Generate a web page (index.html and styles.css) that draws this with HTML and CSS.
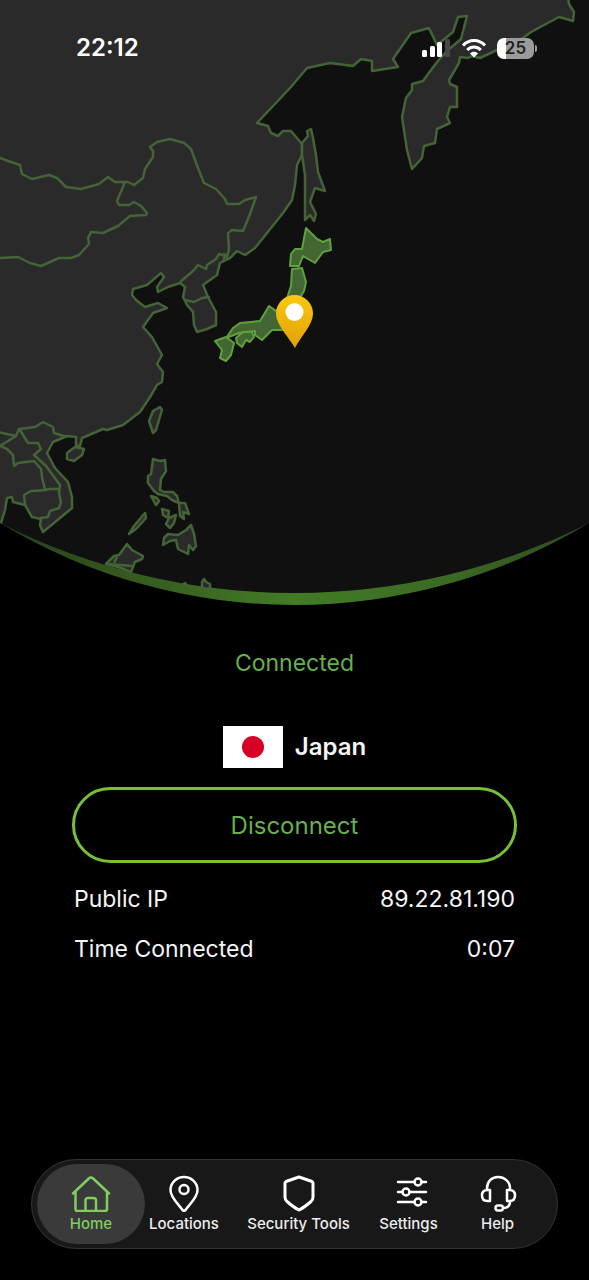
FILE: index.html
```html
<!DOCTYPE html>
<html lang="en">
<head>
    <meta charset="UTF-8">
    <meta name="viewport" content="width=device-width, initial-scale=1.0">
    <title>VPN - Connected</title>
    <link rel="stylesheet" href="styles.css">
</head>
<body>

    <header class="status-bar">
        <span class="clock">22:12</span>
        <div class="status-icons">
            <svg class="signal" viewBox="0 0 30 18" role="img" aria-label="Signal">
                <rect x="1" y="11" width="5" height="7" rx="1.5"/>
                <rect x="9" y="7" width="5" height="11" rx="1.5"/>
                <rect x="16" y="3" width="5" height="15" rx="1.5"/>
                <rect class="off" x="24" y="0" width="5" height="18" rx="1.5"/>
            </svg>
            <svg class="wifi" viewBox="0 0 26 20" role="img" aria-label="Wi-Fi">
                <path d="M2 7.500C8 .8 18 .8 24 7.500M6.200 12c3.800-4 9.800-4 13.600 0"/>
                <path class="dot" d="M13 19.500 9 15.500c2.200-2.200 5.800-2.200 8 0z"/>
            </svg>
            <div class="battery">25</div>
        </div>
    </header>

    <main>
        <svg class="map" viewBox="0 0 589 606" role="img" aria-label="Map of East Asia with a pin on Japan">
            <defs>
                <clipPath id="globe">
                    <path d="M0 0H589V523A654.500 654.500 0 0 1 0 523z"/>
                </clipPath>
                <linearGradient id="rim">
                    <stop offset="0" stop-color="#263f1c"/>
                    <stop offset=".22" stop-color="#35591f"/>
                    <stop offset=".5" stop-color="#427c27"/>
                    <stop offset=".78" stop-color="#3b6823"/>
                    <stop offset="1" stop-color="#2c4a22"/>
                </linearGradient>
                <linearGradient id="gold" x2="0" y2="1">
                    <stop offset="0" stop-color="#fcc80f"/>
                    <stop offset="1" stop-color="#e0a006"/>
                </linearGradient>
            </defs>

            <path class="sea" d="M0 0H589V523A654.500 654.500 0 0 1 0 523z"/>
            <path fill="url(#rim)" d="M0 523A569.800 569.800 0 0 0 589 523A654.500 654.500 0 0 1 0 523z"/>

            <g class="land" clip-path="url(#globe)">
                <!-- mainland -->
                <path d="M568-3 569 4 574 12 573 21 559 17 531 32 523 38 497 50 480 58 472 56 468 58 460 57 459 63 449 80 450 84 457 87 457 107 450 107 447 117 450 123 437 129 435 143 424 146 422 158 412 169 407 150 402 117 406 98 412 90 412 84 423 81 437 62 448 50 461 39 467 16 458 17 453 32 437 45 429 28 411 33 393 59 398 67 372 71 372 61 361 59 353 66 330 63 307 68 290 88 257 123 268 126 271 133 278 136 283 131 291 131 302 144 302 155 297 165 295 185 292 200 283 213 263 238 255 248 245 255 237 251 230 258 220 263 217 275 203 285 208 297 216 312 216 325 207 329 197 332 194 325 193 312 187 305 183 297 185 287 180 283 168 287 158 292 157 287 164 277 161 273 147 285 133 289 132 295 136 300 145 307 158 303 167 308 153 313 143 327 152 337 162 355 157 364 163 372 162 382 157 385 150 397 140 412 123 425 107 430 103 429 82 438 80 446 76 446 76 437 67 436 53 442 47 453 55 468 68 482 72 497 72 508 60 518 43 532 40 525 41 519 32 517 25 505 13 502 12 497 7 498 5 510 1 523-4 523V-3z"/>
                <!-- borders -->
                <path class="border" d="M-2 157 8 161 20 165 22 174 32 179 49 175 57 178 66 187 81 189 99 184 108 177 115 182 128 182 134 185 143 178 145 169 153 157 153 151 150 147 157 142 170 139 184 143 191 149 198 168 204 183 216 189 225 199 227 204 239 204 245 200 256 197 250 214 243 231 232 230 228 233 229 250 227 256 219 254 216 259 207 265 206 269 198 265 193 271 180 282M125 182 117 201 119 205 129 205 134 202 141 206 147 213 146 215 130 216 118 226 103 233 91 232 88 238 89 244 79 255 71 258 59 258 41 266 30 263 18 257-2 258M185 300 194 302 202 298 210 297M224 262 224 254 229 260"/>
                <path class="border" d="M-2 432 7 434 16 436 19 429 35 427 43 422 53 427 54 433 67 437M20 430 28 443 38 443 41 449 34 455 46 466 60 485 59 493 61 502 59 508 50 511 48 517 40 518M16 436 0 446 7 449 13 455 14 466 18 463 34 461 41 469 42 477 45 490 50 489 59 489M47 490 31 491 24 495 25 505"/>
            </g>

            <g class="land">
                <!-- Sakhalin -->
                <path d="M302 143 308 136 307 131 311 129 313 138 316 155 318 172 325 191 315 188 310 202 316 214 314 221 310 215 305 220 305 175 302 155z"/>
                <!-- Taiwan, Hainan -->
                <path d="M160 407 162 410 156 430 153 433 149 421 153 411z"/>
                <path d="M75 447 84 449 82 455 74 461 67 459 67 453z"/>
                <!-- Philippines -->
                <path d="M153 459 160 461 165 460 166 471 161 479 160 490 164 492 173 492 177 496 179 503 172 500 167 496 158 494 154 491 148 483 148 476 151 474z"/>
                <path d="M151 496 157 498 159 501 156 505zM179 503 185 503 189 514 183 512 184 519 180 516z"/>
                <path d="M162 509 169 511 168 518 163 515zM169 518 176 515 174 523 170 528 166 524z"/>
                <path d="M191 525 194 534 196 546 193 550 189 545 188 554 178 549 176 540 170 541 163 545 164 538 168 534 178 535 186 530z"/>
                <path d="M145 513 146 518 136 529 129 534 134 526z"/>
                <!-- Borneo, Sulawesi -->
                <path d="M127 544 132 550 143 556 142 559 135 562 131 572 118 567 106 564 114 556 119 555z"/>
                <path class="border" d="M106 564 120 565 132 566M114 563 117 557"/>
                <path d="M202 588 202 582 204 579 206 582 210 584 210 589z"/>
                <path class="border" d="M182 585 185 583 187 586"/>
            </g>

            <g class="selected">
                <path d="M306 228 317 239 323 242 330 239 331 250 323 252 315 263 303 256 299 266 290 266 291 254 295 249 302 249z"/>
                <path d="M292 269 302 268 306 282 304 291 296 304 291 307 288 295 291 286z"/>
                <path d="M288 296 300 304 292 328 281 330 272 330 262 340 255 335 255 331 239 333 226 338 233 328 240 323 260 321 269 306 276 311z"/>
                <path d="M226 337 234 343 231 355 226 361 220 358 222 350 215 341z"/>
                <path d="M243 332 252 332 254 337 250 342 246 340 242 347 237 343 236 338z"/>
            </g>

            <path fill="url(#gold)" d="M295 348C288 336 276 325 276 313.500A18.500 18.500 0 0 1 313 313.500C313 325 301 336 295 348z"/>
            <circle class="pin-hole" cx="294.500" cy="312" r="9"/>
        </svg>

        <section class="connection">
            <p class="state">Connected</p>
            <div class="country">
                <svg class="flag" viewBox="0 0 60 42" aria-hidden="true">
                    <rect width="60" height="42" fill="#fff"/>
                    <circle cx="30" cy="21" r="11" fill="#d80027"/>
                </svg>
                <h1>Japan</h1>
            </div>
            <button class="disconnect" type="button">Disconnect</button>
            <dl class="details">
                <div class="row"><dt>Public IP</dt><dd>89.22.81.190</dd></div>
                <div class="row"><dt>Time Connected</dt><dd>0:07</dd></div>
            </dl>
        </section>
    </main>

    <nav class="tabs">
        <a class="tab active" href="#home">
            <svg viewBox="0 0 40 38" aria-hidden="true">
                <path d="M2 19.500 17.800 4.500Q20 2.500 22.200 4.500L38 19.500M4.500 18V35Q4.500 37 6.500 37H34Q36 37 36 35V18M14.500 37V26.500Q14.500 24 17 24H22.500Q25 24 25 26.500V37"/>
            </svg>
            <span>Home</span>
        </a>
        <a class="tab" href="#locations">
            <svg viewBox="0 0 40 38" aria-hidden="true">
                <path d="M18.500 36C15 30.500 6.500 24 6.500 16A13.500 13 0 0 1 33.500 16C33.500 24 25 30.500 21.500 36Q20 37.500 18.500 36z"/>
                <circle cx="20" cy="15.500" r="4.500"/>
            </svg>
            <span>Locations</span>
        </a>
        <a class="tab" href="#security">
            <svg viewBox="0 0 40 38" aria-hidden="true">
                <path class="thick" d="M20 3 33 7.500Q34 8 34 9V23Q34 26 32 27.500C28 31 24 34 20 36C16 34 12 31 8 27.500Q6 26 6 23V9Q6 8 7 7.500z"/>
            </svg>
            <span>Security Tools</span>
        </a>
        <a class="tab" href="#settings">
            <svg viewBox="0 0 40 38" aria-hidden="true">
                <path d="M9 8H25M33 8H37M9 18H13M21 18H37M9 28H25M33 28H37"/>
                <circle cx="29" cy="8" r="3.500"/>
                <circle cx="17" cy="18" r="3.500"/>
                <circle cx="29" cy="28" r="3.500"/>
            </svg>
            <span>Settings</span>
        </a>
        <a class="tab" href="#help">
            <svg viewBox="0 0 40 38" aria-hidden="true">
                <path d="M9 15V14.500C9 7.500 13.500 3 20 3S32 7.500 32 14.500V15M12 16V27H9.500C6 27 4 25 4 21.500S6 16 9.500 16zM29 16V27H31.500C35 27 37 25 37 21.500S35 16 31.500 16zM32 27.500C32 32 29.500 34 25 34"/>
                <rect x="17.500" y="31.500" width="7.500" height="5" rx="2.500"/>
            </svg>
            <span>Help</span>
        </a>
    </nav>

</body>
</html>
```
FILE: styles.css
```css
body {
    display: flex;
    flex-direction: column;
    min-height: 100vh;
    margin: 0;
    background-color: #000;
    color: #f5f5f5;
    font-family: Inter, "Liberation Sans", sans-serif;
}
.status-bar {
    position: absolute;
    top: 0;
    left: 0;
    right: 0;
    display: flex;
    justify-content: space-between;
    align-items: center;
    padding: 36px 55px 0 76px;
    color: #fff;
}
.clock {
    font-size: 24px;
    line-height: 24px;
    font-weight: 600;
}
.status-icons {
    display: flex;
    align-items: center;
    gap: 10px;
}
.signal {
    width: 30px;
    height: 18px;
    fill: #fff;
}
.signal .off {
    fill: #484848;
}
.wifi {
    width: 26px;
    height: 20px;
    fill: none;
    stroke: #fff;
    stroke-width: 3;
}
.wifi .dot {
    fill: #fff;
    stroke: none;
}
.battery {
    position: relative;
    width: 37px;
    border-radius: 7px;
    background: linear-gradient(90deg, #fff 25%, #9b9b9b 25%);
    color: #222;
    font-size: 17px;
    line-height: 21px;
    font-weight: 600;
    text-align: center;
}
.battery::after {
    content: "";
    position: absolute;
    top: 7px;
    right: -3px;
    width: 2px;
    height: 7px;
    border-radius: 0 2px 2px 0;
    background-color: #9b9b9b;
}
.map {
    display: block;
    width: 100%;
}
.sea {
    fill: #101010;
}
.land {
    fill: #2a2a2a;
    stroke: #446336;
    stroke-width: 2.5;
    stroke-linejoin: round;
}
.land .border {
    fill: none;
}
.selected {
    fill: #426732;
    stroke: #60a03f;
    stroke-width: 2;
    stroke-linejoin: round;
}
.pin-hole {
    fill: #fff;
}
.connection {
    padding: 42px 72px 0;
}
.state {
    margin: 0;
    color: #67b04c;
    font-size: 23px;
    line-height: 30px;
    text-align: center;
}
.country {
    display: flex;
    justify-content: center;
    align-items: center;
    gap: 12px;
    margin-top: 48px;
}
.flag {
    width: 60px;
    height: 42px;
}
.country h1 {
    margin: 0;
    font-size: 24px;
    line-height: 30px;
    font-weight: 600;
}
.disconnect {
    display: block;
    width: 100%;
    height: 76px;
    margin-top: 19px;
    border: 3px solid #77bf35;
    border-radius: 38px;
    background: none;
    color: #67b04c;
    font-family: inherit;
    font-size: 24px;
    cursor: pointer;
}
.details {
    margin: 11px 0 0;
    padding: 0 2px;
}
.row {
    display: flex;
    justify-content: space-between;
    font-size: 23px;
    line-height: 50px;
}
.row dd {
    margin: 0;
}
.tabs {
    display: grid;
    grid-template-columns: 108fr 78fr 151fr 69fr 109fr;
    margin: auto 31px 31px;
    padding: 4px 5px;
    border: 1px solid #343434;
    border-radius: 45px;
    background-color: #181818;
}
.tab {
    display: flex;
    flex-direction: column;
    align-items: center;
    gap: 2px;
    padding: 10px 0;
    border-radius: 40px;
    color: #ececec;
    font-size: 15px;
    line-height: 20px;
    font-weight: 500;
    text-decoration: none;
    white-space: nowrap;
}
.tab svg {
    width: 40px;
    height: 38px;
    fill: none;
    stroke: #fff;
    stroke-width: 2.5;
    stroke-linecap: round;
    stroke-linejoin: round;
}
.tab .thick {
    stroke-width: 3;
}
.tab.active {
    background-color: #3a3a3a;
    color: #7fce5f;
}
.tab.active svg {
    stroke: #7fce5f;
}
```
